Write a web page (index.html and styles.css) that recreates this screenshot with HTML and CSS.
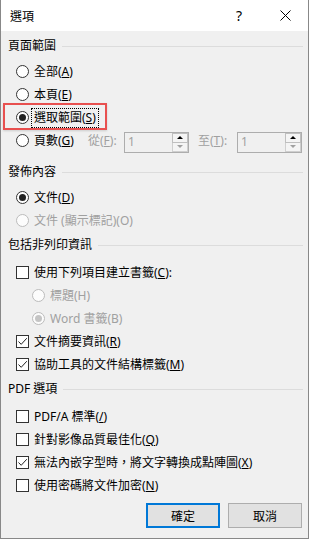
FILE: index.html
```html
<html>
    <head>
        <meta charset="utf-8">
        <link rel="stylesheet" href="styles.css">
    </head>
    <body>
    <div class="dialog">
        <div class="titlebar">
            <span class="title">選項</span>
            <span class="tb-btn help">?</span>
            <span class="tb-btn">
                <svg width="11" height="11" viewBox="0 0 11 11"><path d="M0.5 0.5 L10.5 10.5 M10.5 0.5 L0.5 10.5" stroke="#000" stroke-width="1" fill="none"/></svg>
            </span>
        </div>

        <div class="content">
            <div class="group-head first"><span>頁面範圍</span><span class="rule"></span></div>
            <div class="row"><span class="radio"></span><span>全部(<u>A</u>)</span></div>
            <div class="row"><span class="radio"></span><span>本頁(<u>E</u>)</span></div>
            <div class="row">
                <span class="radio on"></span><span class="focus">選取範圍(<u>S</u>)</span>
                <span class="highlight"></span>
            </div>
            <div class="row pages">
                <span class="radio"></span><span class="pages-label">頁數(<u>G</u>)</span>
                <span class="from-label off">從(<u>F</u>):</span>
                <span class="spin"><span class="val">1</span><span class="arrows"><span class="up"></span><span class="down"></span></span></span>
                <span class="to-label off">至(<u>T</u>):</span>
                <span class="spin"><span class="val">1</span><span class="arrows"><span class="up"></span><span class="down"></span></span></span>
            </div>

            <div class="group-head"><span>發佈內容</span><span class="rule"></span></div>
            <div class="row"><span class="radio on"></span><span>文件(<u>D</u>)</span></div>
            <div class="row off"><span class="radio dis"></span><span>文件 (顯示標記)(O)</span></div>

            <div class="group-head loose"><span>包括非列印資訊</span><span class="rule"></span></div>
            <div class="row"><span class="check"></span><span>使用下列項目建立書籤(<u>C</u>):</span></div>
            <div class="row sub off"><span class="radio dis"></span><span>標題(H)</span></div>
            <div class="row sub off"><span class="radio dis on"></span><span>Word 書籤(B)</span></div>
            <div class="row"><span class="check"><svg width="11" height="11" viewBox="0 0 11 11"><path d="M1.5 5.5 L4.2 8.3 L9.8 2.2" stroke="#222" stroke-width="1" fill="none"/></svg></span><span>文件摘要資訊(<u>R</u>)</span></div>
            <div class="row"><span class="check"><svg width="11" height="11" viewBox="0 0 11 11"><path d="M1.5 5.5 L4.2 8.3 L9.8 2.2" stroke="#222" stroke-width="1" fill="none"/></svg></span><span>協助工具的文件結構標籤(<u>M</u>)</span></div>

            <div class="group-head loose"><span>PDF 選項</span><span class="rule"></span></div>
            <div class="row"><span class="check"></span><span>PDF/A 標準(<u>/</u>)</span></div>
            <div class="row"><span class="check"></span><span>針對影像品質最佳化(<u>Q</u>)</span></div>
            <div class="row"><span class="check"><svg width="11" height="11" viewBox="0 0 11 11"><path d="M1.5 5.5 L4.2 8.3 L9.8 2.2" stroke="#222" stroke-width="1" fill="none"/></svg></span><span>無法內嵌字型時，將文字轉換成點陣圖(<u>X</u>)</span></div>
            <div class="row"><span class="check"></span><span>使用密碼將文件加密(<u>N</u>)</span></div>

            <div class="buttons">
                <button class="btn default">確定</button>
                <button class="btn">取消</button>
            </div>
        </div>
    </div>
    </body>
</html>
```

FILE: styles.css
```css
* {
    box-sizing: border-box;
}

body {
    margin: 0;
    background: #fff;
    font-family: "Noto Sans", "Noto Sans CJK TC", sans-serif;
    font-size: 12px;
    color: #000;
}

.dialog {
    width: 309px;
    height: 539px;
    border: 1px solid #888;
    border-top: none;
    background: #f0f0f0;
    display: flex;
    flex-direction: column;
}

.titlebar {
    height: 31px;
    background: #fff;
    display: flex;
    align-items: center;
    flex: none;
}

.title {
    flex: 1;
    padding-left: 9px;
    font-size: 12px;
}

.tb-btn {
    width: 46px;
    height: 31px;
    display: flex;
    align-items: center;
    justify-content: center;
}

.help {
    font-size: 14px;
}

.content {
    flex: 1;
    padding: 5px 5px 0 7px;
    display: flex;
    flex-direction: column;
}

.group-head {
    height: 20px;
    display: flex;
    align-items: center;
    margin-top: 3px;
    margin-bottom: 4px;
    line-height: 16px;
}

.group-head.first {
    margin-top: 0;
}

.group-head.loose {
    margin-bottom: 6px;
}

.rule {
    flex: 1;
    height: 1px;
    background: #dcdcdc;
    margin-left: 6px;
}

.row {
    height: 23px;
    display: flex;
    align-items: center;
    padding-left: 8px;
    position: relative;
    line-height: 16px;
    white-space: nowrap;
}

.row.sub {
    padding-left: 24px;
}

.row.pages {
    margin-bottom: 7px;
}

.off {
    color: #a0a0a0;
}

.radio {
    width: 13px;
    height: 13px;
    flex: none;
    margin-right: 5px;
    border: 1px solid #333;
    border-radius: 50%;
    background: #fff;
    display: flex;
    align-items: center;
    justify-content: center;
}

.radio.on::after {
    content: "";
    width: 7px;
    height: 7px;
    border-radius: 50%;
    background: #222;
}

.radio.dis {
    border-color: #bcbcbc;
    background: #fcfcfc;
}

.radio.dis.on::after {
    background: #c4c4c4;
}

.check {
    width: 13px;
    height: 13px;
    flex: none;
    margin-right: 5px;
    border: 1px solid #333;
    background: #fff;
    display: flex;
}

.focus {
    outline: 1px dotted #000;
    outline-offset: 1px;
    padding: 0 1px;
    margin-left: -1px;
}

.highlight {
    position: absolute;
    left: -5px;
    top: -3px;
    width: 104px;
    height: 27px;
    border: 2px solid #e8504f;
    box-shadow: 0 1px 2px rgba(0, 0, 0, 0.15);
}

.pages-label {
    width: 54px;
}

.from-label {
    width: 36px;
}

.to-label {
    width: 39px;
    margin-left: 9px;
}

.spin {
    width: 65px;
    height: 21px;
    border: 1px solid #adadad;
    background: #f0f0f0;
    display: flex;
    align-items: center;
    justify-content: space-between;
    margin-top: 3px;
}

.val {
    padding-left: 3px;
    color: #a0a0a0;
}

.arrows {
    width: 16px;
    height: 19px;
    display: flex;
    flex-direction: column;
    margin-right: 0;
}

.up, .down {
    flex: 1;
    display: flex;
    align-items: center;
    justify-content: center;
    border: 1px solid #cfcfcf;
    background: #f4f4f4;
}

.up {
    border-color: #bfbfbf;
}

.down {
    border-top: none;
}

.up::after {
    content: "";
    border-left: 3px solid transparent;
    border-right: 3px solid transparent;
    border-bottom: 3px solid #000;
}

.down::after {
    content: "";
    border-left: 3px solid transparent;
    border-right: 3px solid transparent;
    border-top: 3px solid #a0a0a0;
}

.buttons {
    display: flex;
    justify-content: flex-end;
    gap: 8px;
    margin-top: 6px;
    padding-right: 1px;
}

.btn {
    width: 74px;
    height: 25px;
    border: 1px solid #adadad;
    background: #e1e1e1;
    font-family: "Noto Sans", "Noto Sans CJK TC", sans-serif;
    font-size: 12px;
    color: #000;
    padding: 0;
}

.btn.default {
    border: 2px solid #0078d7;
}
```
